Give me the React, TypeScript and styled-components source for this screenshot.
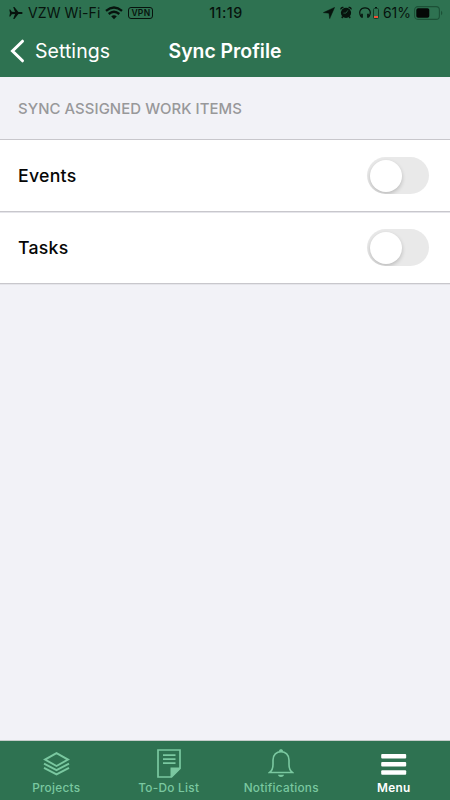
import React from "react";
import styled, { createGlobalStyle } from "styled-components";

const GlobalStyle = createGlobalStyle`
  * { box-sizing: border-box; }
  body { margin: 0; background: #f2f2f7; }
`;

const Screen = styled.div`
  width: 450px;
  height: 800px;
  display: flex;
  flex-direction: column;
  overflow: hidden;
  background: #f2f2f7;
  font-family: Inter, "Liberation Sans", sans-serif;
  color: #060606;
`;

const Header = styled.header`
  height: 77px;
  flex: none;
  background: #2e7251;
`;

const StatusBar = styled.div`
  height: 25px;
  display: grid;
  grid-template-columns: 1fr auto 1fr;
  align-items: center;
  color: #07130d;
  padding: 0 7px 0 9px;
`;

const StatusGroup = styled.div<{ $end?: boolean }>`
  display: flex;
  align-items: center;
  justify-content: ${(p) => (p.$end ? "flex-end" : "flex-start")};
  svg { display: block; flex: none; }
`;

const StatusText = styled.span<{ $size?: number; $weight?: number; $spacing?: number }>`
  font-size: ${(p) => p.$size ?? 14}px;
  line-height: 25px;
  white-space: nowrap;
  font-weight: ${(p) => p.$weight ?? 400};
  letter-spacing: ${(p) => p.$spacing ?? 0}px;
`;

const StatusIcon = styled.span<{ $before?: number }>`
  display: flex;
  align-items: center;
  margin-left: ${(p) => p.$before ?? 0}px;
`;

const VpnBadge = styled.span`
  width: 25px;
  height: 12px;
  margin-left: 5px;
  border: 1px solid #07130d;
  border-radius: 3px;
  font-size: 8.5px;
  font-weight: 600;
  line-height: 10px;
  text-align: center;
  letter-spacing: 0.3px;
`;

const NavBar = styled.div`
  height: 52px;
  display: grid;
  grid-template-columns: 1fr auto 1fr;
  align-items: center;
  color: #fff;
`;

const BackButton = styled.button`
  display: flex;
  align-items: center;
  gap: 10px;
  padding: 0 0 0 10px;
  border: 0;
  background: none;
  color: #fff;
  font: 400 19.5px/50px Inter, sans-serif;
  letter-spacing: 0.05px;
`;

const Title = styled.h1`
  margin: 0;
  font-size: 19.4px;
  line-height: 50px;
  font-weight: 600;
  letter-spacing: 0;
`;

const SectionHeader = styled.h2`
  height: 62px;
  flex: none;
  margin: 0;
  padding: 1px 18px 0;
  font-size: 14.9px;
  line-height: 63px;
  font-weight: 450;
  letter-spacing: 0.08px;
  color: #98989a;
`;

const List = styled.div`
  flex: none;
  background: #fff;
  border-top: 1px solid #c8c7cc;
`;

const Row = styled.div`
  height: 72px;
  display: flex;
  align-items: center;
  justify-content: space-between;
  padding: 0 21px 0 18px;
  border-bottom: 1px solid #c8c7cc;
  box-shadow: 0 1px #e5e5ea;
`;

const RowLabel = styled.span`
  font-size: 17.7px;
  font-weight: 500;
  letter-spacing: 0.25px;
`;

const Toggle = styled.button`
  width: 62px;
  height: 37px;
  padding: 3px;
  border: 0;
  border-radius: 19px;
  background: #e9e9e9;
  overflow: hidden;
`;

const Knob = styled.span`
  display: block;
  width: 32px;
  height: 32px;
  border-radius: 50%;
  background: #fff;
  box-shadow: 0 2px 4px rgba(0, 0, 0, 0.2);
`;

const Content = styled.main`
  flex: 1;
`;

const TabBar = styled.nav`
  height: 60px;
  flex: none;
  display: grid;
  grid-template-columns: repeat(4, 1fr);
  background: #2e7251;
  border-top: 1px solid #c6cdcb;
`;

const Tab = styled.a<{ $active?: boolean }>`
  display: flex;
  flex-direction: column;
  align-items: center;
  padding-top: 7px;
  color: ${(p) => (p.$active ? "#fff" : "#7ac8a0")};
  font-size: 11.8px;
  line-height: 16px;
  font-weight: ${(p) => (p.$active ? 600 : 500)};
  letter-spacing: 0.27px;
  svg { display: block; margin-bottom: 1px; }
`;

const PlaneIcon = () => (
  <svg width="14" height="14" viewBox="0 0 14 14" fill="currentColor">
    <path d="M.3 3.6h1l1.5 2.2 3.2.2-1.8-5h1.2l4 5h2.4c2.5.1 2.5 1.9 0 2H9.4l-4 5H4.2L6 8l-3.2.2-1.5 2.2h-1L1 7z" />
  </svg>
);

const WifiIcon = () => (
  <svg width="18" height="14" viewBox="0 0 18 14" fill="none" stroke="currentColor" strokeWidth="2.3">
    <path d="M1 4.8Q9-1.9 17 4.8M3.7 8Q9 3.5 14.3 8" />
    <path d="M6.2 10.3Q9 8 11.8 10.3L9 13.2z" fill="currentColor" stroke="none" />
  </svg>
);

const LocationIcon = () => (
  <svg width="12" height="12" viewBox="0 0 12 12" fill="currentColor">
    <path d="M11.6.4 6.7 11.6 6 6.2.4 5.6z" stroke="currentColor" strokeWidth=".5" strokeLinejoin="round" />
  </svg>
);

const AlarmIcon = () => (
  <svg width="12" height="13" viewBox="0 0 12 13" fill="currentColor">
    <circle cx="6" cy="6.8" r="5.1" />
    <path d="M.4 3.7C-.2 1.4 2.2-.1 3.9 1.2zM11.6 3.7C12.2 1.4 9.8-.1 8.1 1.2zM2 10l1.5 1-1.2 1.4-1-.9zM10 10l-1.5 1 1.2 1.4 1-.9z" />
    <path d="M3.4 7.1H6l1.8-2.7" fill="none" stroke="#2e7251" strokeWidth=".7" />
  </svg>
);

const HeadphonesIcon = () => (
  <svg width="12" height="12" viewBox="0 0 12 12" fill="none" stroke="currentColor" strokeWidth="1.2">
    <path d="M2.2 9.8C-1 5.1 1.5.9 6 .9s7 4.2 3.8 8.9" />
    <path d="M3 6.8v4M9 6.8v4" strokeWidth="1.7" />
  </svg>
);

const SmallBatteryIcon = () => (
  <svg width="6" height="12" viewBox="0 0 6 12">
    <path d="M2 .5h2" stroke="#07130d" />
    <rect x=".5" y="1.5" width="5" height="10" rx="1" fill="none" stroke="#123d28" />
    <path d="M1 9h4v2H1z" fill="#f05237" />
  </svg>
);

const BatteryIcon = () => (
  <svg width="29" height="14" viewBox="0 0 29 14">
    <rect x=".6" y=".6" width="24.8" height="12.8" rx="3.4" fill="none" stroke="#1c5137" strokeWidth="1.1" />
    <rect x="2.3" y="2.3" width="13" height="9.4" rx="1.8" fill="#050706" />
    <path d="M27 4.8c1.8.7 1.8 3.7 0 4.4z" fill="#1c5137" />
  </svg>
);

const BackIcon = () => (
  <svg width="15" height="24" viewBox="0 0 15 24" fill="none" stroke="currentColor" strokeWidth="3" strokeLinecap="round">
    <path d="M12.5 2.2 2.5 12l10 9.8" />
  </svg>
);

const ProjectsIcon = () => (
  <svg width="28" height="31" viewBox="0 0 28 31" fill="none" stroke="currentColor" strokeWidth="1.9">
    <path d="M14.5 5.2 26 11.6 14.5 18 3 11.6z" />
    <path d="m2 15.6 12.5 6.6L27 15.6M2 19.8l12.5 6.6L27 19.8" />
  </svg>
);

const TodoIcon = () => (
  <svg width="24" height="31" viewBox="0 0 24 31" fill="none" stroke="currentColor" strokeWidth="1.7">
    <path d="M1 2h22v18.5l-8.5 8.5H1z" />
    <path d="M6 7.2h12.5M6 11.2h12.5M6 15.2h12.5" />
    <path d="M13.5 19.5H23v1.1L14.5 29h-1z" fill="currentColor" stroke="none" />
  </svg>
);

const BellIcon = () => (
  <svg width="26" height="31" viewBox="0 0 26 31" fill="none" stroke="currentColor" strokeWidth="1.6">
    <path d="M1.6 24.5c2.2-1.7 3.4-3.5 3.4-8V12c0-5 3.5-8.4 8-8.4s8 3.4 8 8.4v4.5c0 4.5 1.2 6.3 3.4 8z" />
    <path d="M11 3.8V3c0-2.5 4-2.5 4 0v.8zM10 26.7h6c-.5 3-5.5 3-6 0z" fill="currentColor" stroke="none" />
  </svg>
);

const MenuIcon = () => (
  <svg width="26" height="31" viewBox="0 0 26 31" fill="currentColor">
    <rect x=".2" y="6" width="25" height="4.5" rx="1" />
    <rect x=".2" y="14.1" width="25" height="4.5" rx="1" />
    <rect x=".2" y="22.2" width="25" height="4.5" rx="1" />
  </svg>
);

const tabs = [
  { label: "Projects", Icon: ProjectsIcon },
  { label: "To-Do List", Icon: TodoIcon },
  { label: "Notifications", Icon: BellIcon },
  { label: "Menu", Icon: MenuIcon, active: true },
];

export default function App() {
  return (
    <Screen>
      <GlobalStyle />
      <Header>
        <StatusBar>
          <StatusGroup>
            <StatusIcon><PlaneIcon /></StatusIcon>
            <StatusIcon $before={5}><StatusText $spacing={0.1}>VZW Wi-Fi</StatusText></StatusIcon>
            <StatusIcon $before={5}><WifiIcon /></StatusIcon>
            <VpnBadge>VPN</VpnBadge>
          </StatusGroup>
          <StatusText $size={14.3} $weight={550} $spacing={0.5}>11:19</StatusText>
          <StatusGroup $end>
            <StatusIcon><LocationIcon /></StatusIcon>
            <StatusIcon $before={5}><AlarmIcon /></StatusIcon>
            <StatusIcon $before={7}><HeadphonesIcon /></StatusIcon>
            <StatusIcon $before={2}><SmallBatteryIcon /></StatusIcon>
            <StatusIcon $before={4}><StatusText>61%</StatusText></StatusIcon>
            <StatusIcon $before={3}><BatteryIcon /></StatusIcon>
          </StatusGroup>
        </StatusBar>
        <NavBar>
          <BackButton><BackIcon />Settings</BackButton>
          <Title>Sync Profile</Title>
        </NavBar>
      </Header>
      <Content>
        <SectionHeader>SYNC ASSIGNED WORK ITEMS</SectionHeader>
        <List>
          {["Events", "Tasks"].map((label) => (
            <Row key={label}>
              <RowLabel>{label}</RowLabel>
              <Toggle role="switch" aria-checked={false} aria-label={label}><Knob /></Toggle>
            </Row>
          ))}
        </List>
      </Content>
      <TabBar>
        {tabs.map(({ label, Icon, active }) => (
          <Tab key={label} $active={active}><Icon />{label}</Tab>
        ))}
      </TabBar>
    </Screen>
  );
}
